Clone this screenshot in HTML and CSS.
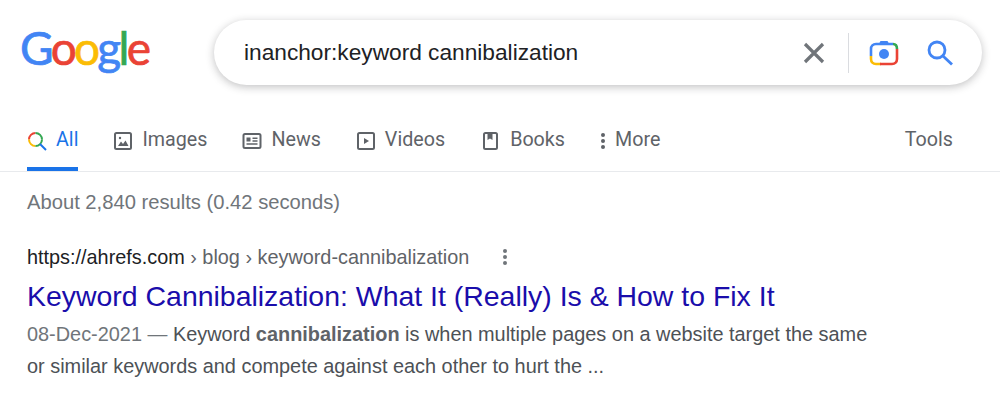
FILE: index.html
```html
<!DOCTYPE html>
<html>
  <head>
    <meta name="viewport" content="width=device-width, initial-scale=1" />
    <link rel="stylesheet" href="styles.css">
  </head>
  <body>
    <div class="header">
      <div class="logo"><span class="blue">G</span><span class="red">o</span><span class="yellow">o</span><span class="blue">g</span><span class="green">l</span><span class="red">e</span></div>
      <div class="search-box">
        <div class="query">inanchor:keyword cannibalization</div>
        <svg class="clear-icon" width="28" height="28" viewBox="0 0 28 28"><path d="M5 5L23 23M23 5L5 23" stroke="#70757a" stroke-width="3.2" fill="none"/></svg>
        <div class="divider"></div>
        <svg class="camera-icon" width="30" height="28" viewBox="0 0 30 28">
          <path d="M9.5 5.5L11.5 2H18.5L20.5 5.5Z" fill="#4285f4"/>
          <circle cx="15" cy="15" r="5" fill="#4285f4"/>
          <path d="M2 17V10C2 7 4 5 7 5H24" stroke="#4285f4" stroke-width="2.6" fill="none"/>
          <path d="M24 5C26.5 5 28 7 28 10" stroke="#34a853" stroke-width="2.6" fill="none"/>
          <path d="M2 17V20C2 23 4 25 7 25H12" stroke="#fbbc05" stroke-width="2.6" fill="none"/>
          <path d="M11 25H23C26 25 28 23 28 20V10" stroke="#ea4335" stroke-width="2.6" fill="none"/>
        </svg>
        <svg class="search-icon" width="28" height="28" viewBox="0 0 28 28"><circle cx="11" cy="11" r="8" stroke="#4285f4" stroke-width="2.8" fill="none"/><path d="M17 17L26 25.5" stroke="#4285f4" stroke-width="2.8" fill="none"/></svg>
      </div>
    </div>

    <div class="tabs">
      <div class="tab active">
        <svg width="20" height="20" viewBox="0 0 20 20" fill="none" stroke-width="2">
          <path d="M8.5 2A6.5 6.5 0 0 0 2 8.5" stroke="#ea4335"/>
          <path d="M2 8.5A6.5 6.5 0 0 0 8.5 15" stroke="#fbbc05"/>
          <path d="M8.5 2A6.5 6.5 0 0 1 15 8.5" stroke="#34a853"/>
          <path d="M15 8.5A6.5 6.5 0 0 1 8.5 15" stroke="#34a853"/>
          <path d="M13 13L19 19" stroke="#1a73e8"/>
        </svg>
        All
      </div>
      <div class="tab">
        <svg width="20" height="20" viewBox="0 0 20 20" fill="none" stroke="#5f6368" stroke-width="2"><rect x="2" y="2" width="16" height="16" rx="1.5"/><path d="M5 15L8 10.5L10 13L12.5 9.5L15.5 15Z" fill="#5f6368" stroke="none"/><circle cx="7" cy="7" r="1.2" fill="#5f6368" stroke="none"/></svg>
        Images
      </div>
      <div class="tab">
        <svg width="20" height="20" viewBox="0 0 20 20" fill="none" stroke="#5f6368" stroke-width="2"><rect x="1.5" y="3" width="17" height="14" rx="1.5"/><rect x="4.5" y="6.5" width="4" height="4" fill="#5f6368" stroke="none"/><path d="M10.5 7.2H15.5M10.5 10H15.5M4.5 13H15.5" stroke-width="1.5"/></svg>
        News
      </div>
      <div class="tab">
        <svg width="20" height="20" viewBox="0 0 20 20" fill="none" stroke="#5f6368" stroke-width="2"><rect x="2" y="2" width="16" height="16" rx="1.5"/><path d="M8 7L13 10L8 13Z" fill="#5f6368" stroke="none"/></svg>
        Videos
      </div>
      <div class="tab">
        <svg width="21" height="20" viewBox="0 0 21 20" fill="none" stroke="#5f6368" stroke-width="2"><rect x="4" y="2" width="13" height="16" rx="1.5"/><path d="M7.5 2H12.5V9L10 7.5L7.5 9Z" fill="#5f6368" stroke="none"/></svg>
        Books
      </div>
      <div class="tab">
        <svg width="6" height="18" viewBox="0 0 6 18" fill="#5f6368"><circle cx="3" cy="3" r="2"/><circle cx="3" cy="9" r="2"/><circle cx="3" cy="15" r="2"/></svg>
        More
      </div>
      <div class="tools">Tools</div>
    </div>

    <div class="content">
      <div class="stats">About 2,840 results (0.42 seconds)</div>
      <div class="result">
        <div class="cite">
          <div><span class="domain">https://ahrefs.com</span> › blog › keyword-cannibalization</div>
          <svg class="dots" width="6" height="18" viewBox="0 0 6 18" fill="#70757a"><circle cx="3" cy="3" r="2"/><circle cx="3" cy="9" r="2"/><circle cx="3" cy="15" r="2"/></svg>
        </div>
        <a class="title" href="#">Keyword Cannibalization: What It (Really) Is &amp; How to Fix It</a>
        <div class="snippet"><span class="date">08-Dec-2021 — </span>Keyword <b>cannibalization</b> is when multiple pages on a website target the same or similar keywords and compete against each other to hurt the ...</div>
      </div>
    </div>
  </body>
</html>
```

FILE: styles.css
```css
* {
  box-sizing: border-box;
}
body {
  margin: 0;
  background-color: #fff;
  font-family: "Liberation Sans", Arial, sans-serif;
}

.header {
  display: flex;
  align-items: center;
  height: 105px;
  padding: 0 18px 0 20px;
}
.logo {
  width: 194px;
  margin-top: -10px;
  font-family: Lato, sans-serif;
  font-size: 46px;
  letter-spacing: -2.7px;
  line-height: 1;
  -webkit-text-stroke: 0.7px;
}
.blue {
  color: #4285f4;
}
.red {
  color: #ea4335;
}
.yellow {
  color: #fbbc05;
}
.green {
  color: #34a853;
}
.search-box {
  display: flex;
  align-items: center;
  width: 768px;
  height: 65px;
  padding: 0 28px 0 30px;
  border-radius: 33px;
  background-color: #fff;
  box-shadow: 0 2px 8px rgba(32, 33, 36, 0.28);
}
.query {
  flex: 1;
  font-size: 22.7px;
  color: #202124;
}
.divider {
  width: 1px;
  height: 40px;
  margin: 0 20px 0 20px;
  background-color: #dadce0;
}
.camera-icon {
  margin-right: 27px;
}

.tabs {
  display: flex;
  height: 67px;
  padding: 0 47px 0 27px;
  border-bottom: 1px solid #e8eaed;
  font-family: Roboto, sans-serif;
  font-size: 19.7px;
  color: #5f6368;
}
.tab {
  display: flex;
  align-items: center;
  gap: 9px;
  height: 66px;
  margin-right: 35px;
  padding-top: 2px;
}
.tab svg {
  margin-top: 4px;
}
.tab.active {
  color: #1a73e8;
  border-bottom: 4px solid #1a73e8;
  padding-top: 6px;
}
.tools {
  display: flex;
  align-items: center;
  height: 66px;
  margin-left: auto;
  padding-top: 2px;
}

.content {
  padding: 18px 0 0 27px;
}
.stats {
  font-size: 20.2px;
  line-height: 24px;
  color: #70757a;
}
.result {
  width: 850px;
  margin-top: 31px;
}
.cite {
  display: flex;
  align-items: center;
  font-size: 19.85px;
  line-height: 24px;
  color: #5f6368;
}
.domain {
  color: #202124;
}
.dots {
  margin-left: 33px;
}
.title {
  display: block;
  margin-top: 9px;
  font-size: 28.45px;
  line-height: 36px;
  color: #1a0dab;
  text-decoration: none;
}
.snippet {
  margin-top: 4px;
  font-size: 19.9px;
  line-height: 32px;
  color: #4d5156;
}
.date {
  color: #70757a;
}
.snippet b {
  color: #5f6368;
}
```
